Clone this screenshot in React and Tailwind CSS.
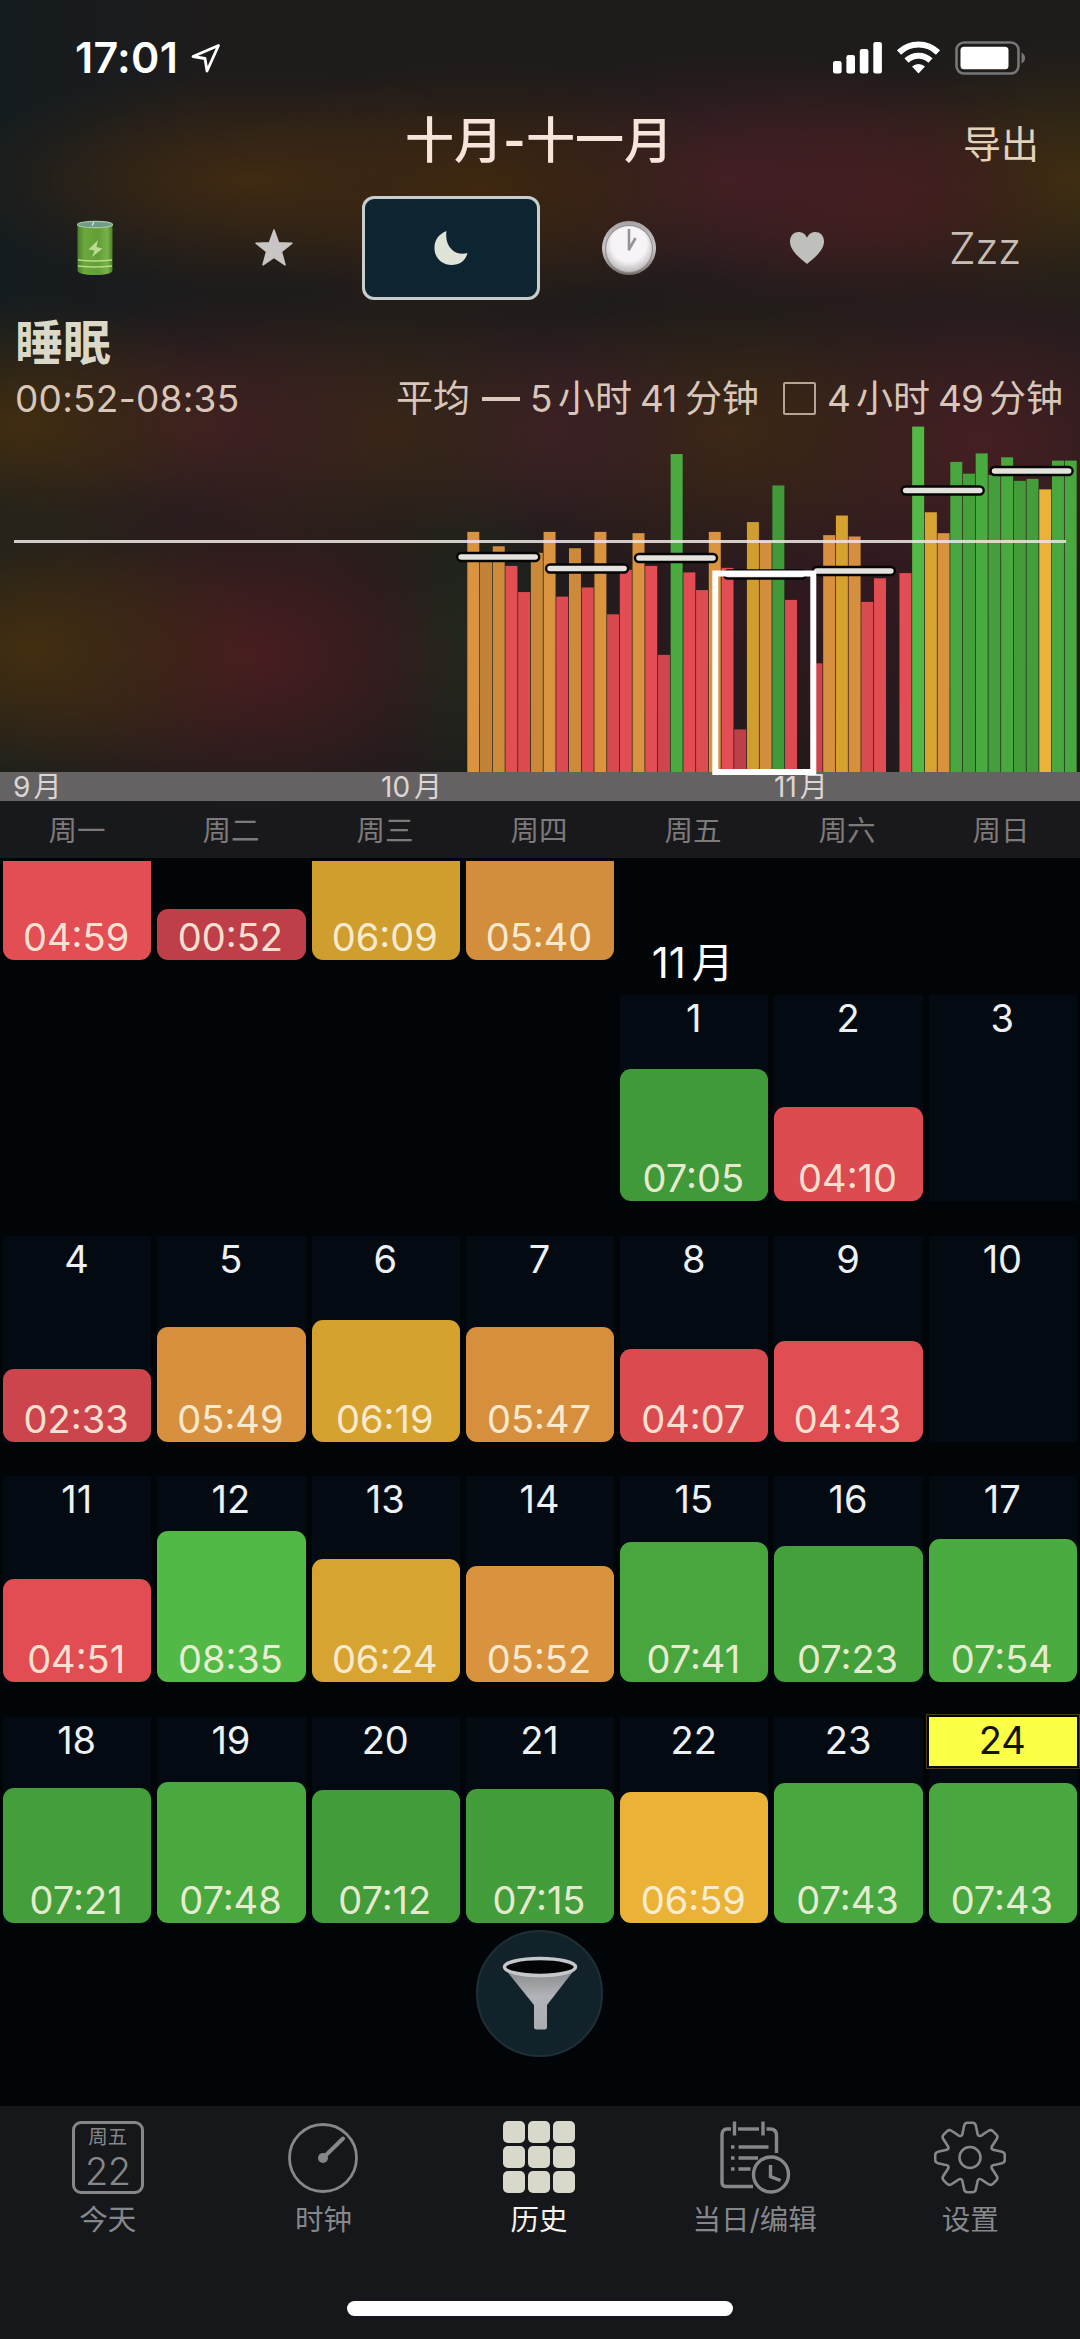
const WEEKDAYS = ['周一', '周二', '周三', '周四', '周五', '周六', '周日'];

// minutes slept per night, 8 Oct - 24 Nov
const NIGHTS = [
  354, 309, 332, 302, 262, 322, 354, 255, 329, 269, 354, 228, 296, 352, 302, 166,
  473, 292, 265, 354, 299, 52, 369, 340, 425, 250, null, 153, 349, 379, 347, 247,
  283, null, 291, 515, 384, 352, 461, 443, 474, 441, 468, 432, 435, 419, 463, 463,
];

// weekly averages: y position inside the plot
const AVERAGES = [137, 148.5, 138, 154.5, 151, 70.5, 51];

const LAST_WEEK_OCT = ['04:59', '00:52', '06:09', '05:40'];

const WEEKS = [
  [null, null, null, null, [1, '07:05'], [2, '04:10'], [3]],
  [[4, '02:33'], [5, '05:49'], [6, '06:19'], [7, '05:47'], [8, '04:07'], [9, '04:43'], [10]],
  [[11, '04:51'], [12, '08:35'], [13, '06:24'], [14, '05:52'], [15, '07:41'], [16, '07:23'], [17, '07:54']],
  [[18, '07:21'], [19, '07:48'], [20, '07:12'], [21, '07:15'], [22, '06:59'], [23, '07:43'], [24, '07:43']],
];

const TODAY = 24;

const RANGES = [
  { from: 0, to: 306, a: [182, 60, 68], b: [227, 78, 83] },
  { from: 306, to: 360, a: [192, 130, 56], b: [221, 149, 63] },
  { from: 360, to: 420, a: [203, 154, 44], b: [236, 178, 56] },
  { from: 420, to: 520, a: [64, 152, 56], b: [83, 187, 71] },
];

function colorFor(min) {
  const r = RANGES.find((x) => min < x.to);
  const t = (min - r.from) / (r.to - r.from);
  return `rgb(${r.a.map((v, i) => Math.round(v + (r.b[i] - v) * t)).join(',')})`;
}

function toMinutes(time) {
  const [h, m] = time.split(':').map(Number);
  return h * 60 + m;
}

function StatusBar() {
  return (
    <div className="flex h-[115px] items-center pl-[75px] pr-[54px] text-white">
      <span className="text-[43px] font-semibold leading-none tracking-[0.3px]">17:01</span>
      <svg className="ml-[13px] h-[30px] w-[30px]" viewBox="0 0 30 30" fill="none" stroke="currentColor" strokeWidth="2.8" strokeLinejoin="round">
        <path d="M27.5 2.5 L2 13.5 L14 15.5 L16 28 Z" />
      </svg>
      <svg className="ml-auto h-[34px] w-[193px]" viewBox="0 0 193 34">
        <g fill="#fff">
          <rect x="0" y="20" width="8.6" height="12.5" rx="2.2" />
          <rect x="13.4" y="14" width="8.6" height="18.5" rx="2.2" />
          <rect x="26.8" y="8" width="8.6" height="24.5" rx="2.2" />
          <rect x="40.3" y="1" width="8.6" height="31.5" rx="2.2" />
        </g>
        <g fill="none" stroke="#fff" strokeWidth="6">
          <path d="M66 11.5 A28 28 0 0 1 105 11.5" />
          <path d="M73.5 19.5 A17.5 17.5 0 0 1 97.5 19.5" />
        </g>
        <path d="M79 25.5 A9.5 9.5 0 0 1 92 25.5 L85.5 32.5 Z" fill="#fff" />
        <rect x="123.5" y="1.5" width="62" height="31" rx="7.5" fill="none" stroke="#77777a" strokeWidth="2.6" />
        <rect x="127.5" y="5.7" width="48" height="22.5" rx="3.5" fill="#fff" />
        <path d="M188.5 11.5 Q192 13 192 17 Q192 21 188.5 22.5 Z" fill="#77777a" />
      </svg>
    </div>
  );
}

function BatteryIcon() {
  return (
    <svg className="h-[56px] w-[38px]" viewBox="0 0 38 56">
      <defs>
        <linearGradient id="batt" x1="0" x2="1" y1="0" y2="0">
          <stop offset="0" stopColor="#4f7f2a" />
          <stop offset="0.2" stopColor="#6aa83b" />
          <stop offset="0.6" stopColor="#629e36" />
          <stop offset="0.85" stopColor="#78b34a" />
          <stop offset="1" stopColor="#4d8226" />
        </linearGradient>
      </defs>
      <path d="M1.5 4 V50 Q1.5 55 19 55 Q36.5 55 36.5 50 V4 Z" fill="url(#batt)" />
      <ellipse cx="19" cy="4.5" rx="17.5" ry="3.2" fill="#6f9c88" stroke="#a9c5a4" strokeWidth="1.2" />
      <path d="M16 5.5 L18 2" stroke="#dfeee2" strokeWidth="1.3" />
      <path d="M22 20 L12.5 29.5 L18.5 30.5 L16 37 L26.5 28.5 L20.5 27 Z" fill="#b9dc90" />
      <path d="M2 40 Q19 42 36 40 M2 46 Q19 48 36 46" stroke="#b5dc85" strokeWidth="1.6" fill="none" />
    </svg>
  );
}

function ClockIcon() {
  return (
    <svg className="h-[56px] w-[56px]" viewBox="0 0 56 56">
      <defs>
        <linearGradient id="rim" x1="0" x2="0" y1="0" y2="1">
          <stop offset="0" stopColor="#a7a2a4" />
          <stop offset="0.5" stopColor="#c9c5c7" />
          <stop offset="1" stopColor="#77716f" />
        </linearGradient>
        <radialGradient id="face" cx="0.5" cy="0.4" r="0.62">
          <stop offset="0.6" stopColor="#f6f4f6" />
          <stop offset="1" stopColor="#b3afb0" />
        </radialGradient>
      </defs>
      <circle cx="28" cy="28" r="27" fill="url(#rim)" />
      <circle cx="28" cy="29" r="23.5" fill="url(#face)" stroke="#8f8a8c" strokeWidth="1" />
      <path d="M28 9 V29.5 L34.5 18" fill="none" stroke="#97939a" strokeWidth="2.6" strokeLinejoin="round" />
    </svg>
  );
}

function MetricTabs() {
  return (
    <div className="mt-[31px] grid h-[104px] grid-cols-6 px-[6px]">
      <div className="flex items-center justify-center">
        <BatteryIcon />
      </div>
      <div className="flex items-center justify-center pl-[2px]">
        <svg className="h-[40px] w-[40px]" viewBox="0 0 40 40">
          <path
            d="M20 2 L24.6 14.8 L38 15.2 L27.4 23.6 L31 36.8 L20 29.3 L9 36.8 L12.6 23.6 L2 15.2 L15.4 14.8 Z"
            fill="#c8c5c4"
            stroke="#c8c5c4"
            strokeWidth="1.5"
            strokeLinejoin="round"
          />
        </svg>
      </div>
      <div className="flex items-center justify-center rounded-[12px] border-[3px] border-[#c9cecd] bg-[#0c2530]">
        <svg className="h-[36px] w-[36px]" viewBox="0 0 36 36">
          <path d="M13.5 1 C5 4.5 1 11 1.500 19 C2 28.5 9.5 35 18.5 35 C26.5 35 32.5 31 34.5 23 C24 26.5 11 18 13.5 1 Z" fill="#e0e3d8" />
        </svg>
      </div>
      <div className="flex items-center justify-center">
        <ClockIcon />
      </div>
      <div className="flex items-center justify-center">
        <svg className="h-[34px] w-[36px]" viewBox="0 0 36 34">
          <path
            d="M18 33 C13 28.5 1 20.5 1 10.5 C1 -1 15 -2 18 7 C21 -2 35 -1 35 10.5 C35 20.5 23 28.5 18 33 Z"
            fill="#bfbfbc"
          />
        </svg>
      </div>
      <div className="flex items-center justify-center text-[43px] leading-none tracking-[-0.5px] text-[#c6bdb6]">
        <span className="font-[350]">Zzz</span>
      </div>
    </div>
  );
}

function Summary() {
  return (
    <>
      <div className="mt-[19px] h-[48px] pl-[15px] text-[48px] font-bold leading-none text-[#dcd8c8]">睡眠</div>
      <div className="mt-[10px] flex h-[43px] items-center pl-[15px] text-[37px] leading-none text-[#d8c6ba]">
        <span className="w-[381px] whitespace-nowrap tracking-[0.25px]">00:52-08:35</span>
        <span className="w-[86px]">平均</span>
        <span className="h-[4px] w-[38px] bg-[#dcc9bd]" />
        <span className="ml-[10px] w-[28px]">5</span>
        <span className="w-[82px]">小时</span>
        <span className="w-[45px] tracking-[-1px]">41</span>
        <span className="w-[98px]">分钟</span>
        <span className="h-[33px] w-[33px] rounded-[2px] border-2 border-[#b7a493]" />
        <span className="ml-[11px] w-[29px]">4</span>
        <span className="w-[82px]">小时</span>
        <span className="w-[51px] tracking-[-1px]">49</span>
        <span className="w-[80px] whitespace-nowrap">分钟</span>
      </div>
    </>
  );
}

function Chart() {
  const base = 352;
  return (
    <svg className="relative z-10 block h-[352px] w-[1080px] overflow-visible" viewBox="0 0 1080 352">
      {NIGHTS.map((min, i) => {
        if (min === null) return null;
        const h = 8.6 + min * 0.654;
        return <rect key={i} x={467.3 + i * 12.71} y={base - h} width="12" height={h} fill={colorFor(min)} />;
      })}
      <rect x="14" y="120" width="1052" height="3" fill="#e9e4e0" fillOpacity="0.88" />
      {AVERAGES.map((y, i) => (
        <rect
          key={i}
          x={457.2 + i * 88.9}
          y={y - 4}
          width="82"
          height="8"
          rx="4"
          fill="#e4e2dd"
          stroke="#050505"
          strokeWidth="2.4"
        />
      ))}
      <rect x="715.3" y="153.5" width="98" height="198.5" fill="none" stroke="#fff" strokeWidth="6" />
    </svg>
  );
}

function MonthBand() {
  return (
    <div className="flex h-[29px] items-center bg-[#656263] pl-[13px] pt-px text-[28px] leading-none text-[#dcd6d4]">
      <span className="flex w-[368px] gap-[3px]">
        9<span>月</span>
      </span>
      <span className="flex w-[393px] gap-[4px]">
        10<span>月</span>
      </span>
      <span className="flex gap-[3px]">
        11<span>月</span>
      </span>
    </div>
  );
}

function Header() {
  return (
    <header className="h-[858px] bg-[#1e1b1b] bg-[radial-gradient(300px_110px_at_250px_180px,#402a12,#402a1299_40%,#402a1233_75%,transparent),radial-gradient(260px_130px_at_480px_190px,#3f270f,#3f270f99_40%,#3f270f33_75%,transparent),radial-gradient(290px_130px_at_740px_180px,#431f25,#431f2599_40%,#431f2533_75%,transparent),radial-gradient(220px_130px_at_880px_195px,#451e1c,#451e1c99_40%,#451e1c33_75%,transparent),radial-gradient(220px_140px_at_1070px_180px,#3e2f10,#3e2f1099_40%,#3e2f1033_75%,transparent),radial-gradient(220px_130px_at_20px_425px,#412d10,#412d1099_40%,#412d1033_75%,transparent),radial-gradient(230px_130px_at_205px_425px,#412022,#41202299_40%,#41202233_75%,transparent),radial-gradient(210px_150px_at_380px_430px,#382717,#38271799_40%,#38271733_75%,transparent),radial-gradient(190px_130px_at_545px_430px,#3e2027,#3e202799_40%,#3e202733_75%,transparent),radial-gradient(240px_150px_at_730px_430px,#3d2815,#3d281599_40%,#3d281533_75%,transparent),radial-gradient(290px_180px_at_980px_440px,#451f23,#451f2399_40%,#451f2333_75%,transparent),radial-gradient(240px_170px_at_30px_650px,#432e10,#432e1099_40%,#432e1033_75%,transparent),radial-gradient(270px_180px_at_250px_655px,#481d20,#481d2099_40%,#481d2033_75%,transparent),radial-gradient(100px_180px_at_470px_640px,#1a2a1c,transparent),radial-gradient(400px_220px_at_850px_600px,#30191f,transparent),linear-gradient(90deg,#151c1f,transparent_220px)]">
      <StatusBar />
      <div className="relative flex h-[50px] items-center justify-center leading-none">
        <h1 className="flex pr-[2px] text-[49px] font-medium text-[#f7e4da]">
          十月<span className="w-[23px] text-center font-semibold">-</span>十一月
        </h1>
        <button className="absolute right-[41px] top-[10px] text-[38px] leading-none text-[#e3d2ba]">导出</button>
      </div>
      <MetricTabs />
      <Summary />
      <Chart />
      <MonthBand />
      <div className="grid h-[57px] grid-cols-7 items-center bg-[#18191b]/80 pr-[2px] pt-[3px] text-center text-[28.5px] leading-none text-[#7d7a7b]">
        {WEEKDAYS.map((d) => (
          <span key={d}>{d}</span>
        ))}
      </div>
    </header>
  );
}

function SleepBlock({ time, clipped }) {
  const min = toMinutes(time);
  const height = clipped ? 99 : Math.round(39.7 + min * 0.217);
  return (
    <div
      className={`flex items-end justify-center pb-[4px] pr-[2px] text-[38px] leading-none text-[#fdf6e4]/90 ${clipped ? 'rounded-b-[11px]' : 'rounded-[11px]'}`}
      style={{ height, backgroundColor: colorFor(min) }}
    >
      {time}
    </div>
  );
}

function Day({ day }) {
  if (!day) return <div />;
  const [num, time] = day;
  const isToday = num === TODAY;
  return (
    <div className="flex flex-col justify-between bg-[#040a11]">
      <div
        className={`flex h-[49px] items-center justify-center pb-[3px] pr-px text-[38px] leading-none ${isToday ? 'bg-[#fbff45] text-[#15140a] outline-1 outline-offset-2 outline-[#4a3d12]' : 'text-[#eef1f4]'}`}
      >
        {num}
      </div>
      {time && <SleepBlock time={time} />}
    </div>
  );
}

function FilterButton() {
  return (
    <button className="absolute bottom-[49px] left-[476px] flex h-[127px] w-[127px] items-center justify-center rounded-full border-2 border-[#1f2f36] bg-[#12222b]">
      <svg className="mb-[2px] h-[74px] w-[76px]" viewBox="0 0 76 74">
        <defs>
          <linearGradient id="cone" x1="0" x2="0" y1="0" y2="1">
            <stop offset="0" stopColor="#85878a" />
            <stop offset="0.45" stopColor="#b2b3b7" />
            <stop offset="1" stopColor="#a9adb1" />
          </linearGradient>
        </defs>
        <path d="M3 13 L32 49 V71 Q32 73.5 34.5 73.5 H42.5 Q45 73.5 45 71 V49 L73 13 Z" fill="url(#cone)" />
        <ellipse cx="38" cy="11" rx="35.5" ry="8.5" fill="#020405" stroke="#c6c7cb" strokeWidth="3.5" />
      </svg>
    </button>
  );
}

function Calendar() {
  return (
    <main className="relative h-[1248px] overflow-hidden bg-[#010507] pt-[3px]">
      <div className="grid h-[132px] grid-cols-7 gap-x-[6px] px-[3px]">
        {LAST_WEEK_OCT.map((time, i) => (
          <div key={time} className="flex h-[99px] flex-col justify-end">
            <SleepBlock time={time} clipped={i !== 1} />
          </div>
        ))}
        <div className="flex items-end justify-center gap-[6px] pb-[9px] pr-[3px] text-[42px] leading-none text-white">
          11<span>月</span>
        </div>
      </div>
      {WEEKS.map((week, i) => (
        <div key={i} className="grid h-[240.6px] grid-cols-7 gap-x-[6px] px-[3px] pb-[32.5px] pt-[2px]">
          {week.map((day, j) => (
            <Day key={j} day={day} />
          ))}
        </div>
      ))}
      <FilterButton />
    </main>
  );
}

function gearPath() {
  const pt = (angle, r, side) => {
    const x = 36 + r * Math.sin(angle) + side * Math.cos(angle);
    const y = 36 - r * Math.cos(angle) + side * Math.sin(angle);
    return `${x.toFixed(2)} ${y.toFixed(2)}`;
  };
  let d = '';
  for (let i = 0; i < 8; i++) {
    const a = (i * Math.PI) / 4;
    const next = a + Math.PI / 8;
    d += `${i ? 'L' : 'M'}${pt(a, 25.5, -7.2)} L${pt(a, 32, -5.8)} Q${pt(a, 34.8, -5.2)} ${pt(a, 34.8, -2.5)} `;
    d += `L${pt(a, 34.8, 2.5)} Q${pt(a, 34.8, 5.2)} ${pt(a, 32, 5.8)} L${pt(a, 25.5, 7.2)} `;
    d += `Q${pt(next, 20.5, 0)} ${pt(a + Math.PI / 4, 25.5, -7.2)} `;
  }
  return d + 'Z';
}

function TodayIcon() {
  return (
    <div className="flex h-[73px] w-[72px] flex-col items-center rounded-[9px] border-[3px] border-[#85888a] pt-[4px] leading-none">
      <span className="text-[19.5px]">周五</span>
      <span className="mt-[4px] text-[38px] font-[350] leading-none tracking-[-0.5px]">22</span>
    </div>
  );
}

function DialIcon() {
  return (
    <svg className="h-[73px] w-[72px]" viewBox="0 0 72 73" fill="none" stroke="currentColor">
      <circle cx="36" cy="37" r="33.5" strokeWidth="2.8" />
      <path d="M36 37 L56 17.5" strokeWidth="4" strokeLinecap="round" />
      <circle cx="36" cy="37" r="5" fill="currentColor" stroke="none" />
    </svg>
  );
}

function GridIcon() {
  return (
    <div className="grid h-[73px] w-[72px] grid-cols-3 gap-[3px] pb-px">
      {Array.from({ length: 9 }, (_, i) => (
        <span key={i} className="rounded-[5px] bg-[#d8d9cb]" />
      ))}
    </div>
  );
}

function EditIcon() {
  return (
    <svg className="h-[73px] w-[72px]" viewBox="0 0 72 73" fill="none" stroke="currentColor">
      <g strokeWidth="3.4">
        <path d="M34 65.5 H7 Q3 65.5 3 61.5 V14 Q3 8 8 8 H12" />
        <path d="M19 8 H40" />
        <path d="M47.5 8 H51 Q57.5 8 57.5 14.5 V32" />
        <path d="M15.5 0.5 V14.5 M44 0.5 V14.5" />
      </g>
      <path d="M12 26 H15.5 M19.5 26 H49.5 M12 37 H15.5 M19.5 37 H39 M12 48 H15.5 M19.5 48 H31.5" strokeWidth="3.6" />
      <circle cx="52" cy="53.5" r="17.5" strokeWidth="3.4" />
      <path d="M51.5 44 V55.5 L61.5 59.5" strokeWidth="3.4" />
    </svg>
  );
}

function GearIcon() {
  return (
    <svg className="h-[73px] w-[72px]" viewBox="0 -0.5 72 73" fill="none" stroke="currentColor" strokeWidth="2.6" strokeLinejoin="round">
      <path d={gearPath()} />
      <circle cx="36" cy="36" r="10.5" />
    </svg>
  );
}

const TABS = [
  { label: '今天', icon: TodayIcon },
  { label: '时钟', icon: DialIcon },
  { label: '历史', icon: GridIcon, active: true },
  { label: '当日/编辑', icon: EditIcon },
  { label: '设置', icon: GearIcon },
];

function TabBar() {
  return (
    <nav className="flex h-[233px] flex-col items-center bg-[#15171a]">
      <div className="grid w-full grid-cols-5 pr-[2px] pt-[15px]">
        {TABS.map(({ label, icon: Icon, active }) => (
          <button key={label} className={`flex flex-col items-center ${active ? 'text-[#f3f3ee]' : 'text-[#85888a]'}`}>
            <Icon />
            <span className="mt-[12px] text-[28.5px] leading-none">{label}</span>
          </button>
        ))}
      </div>
      <div className="mb-[23px] mt-auto h-[15px] w-[386px] rounded-full bg-white" />
    </nav>
  );
}

export default function App() {
  return (
    <div className="h-[2339px] w-[1080px] overflow-hidden bg-[#010507] font-['Inter','Noto_Sans_CJK_SC',sans-serif]">
      <Header />
      <Calendar />
      <TabBar />
    </div>
  );
}
